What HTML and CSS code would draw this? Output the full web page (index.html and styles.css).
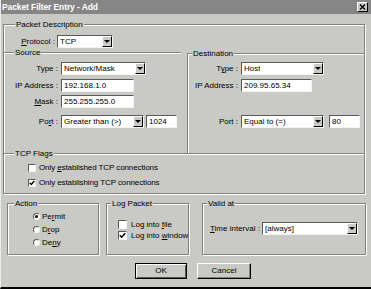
FILE: index.html
```html
<!DOCTYPE html>
<html lang="en">
<head>
    <meta charset="UTF-8">
    <title>Packet Filter Entry - Add</title>
    <link rel="stylesheet" href="styles.css">
</head>
<body>
    <div class="window">
        <div class="titlebar">
            <span class="title">Packet Filter Entry - Add</span>
            <span class="close">
                <svg width="7" height="6" viewBox="0 0 7 6"><path d="M1 0.5 L6 5.5 M6 0.5 L1 5.5" stroke="#000" stroke-width="1.4"/></svg>
            </span>
        </div>

        <div class="group desc">
            <span class="legend lg-desc">Packet Description</span>

            <div class="row protocol-row">
                <span class="lbl lbl-proto"><u>P</u>rotocol :</span>
                <div class="combo w-proto"><span class="val">TCP</span><span class="arrow"></span></div>
            </div>

            <div class="split">
                <div class="source">
                    <span class="legend lg-src">Source</span>
                    <div class="row">
                        <span class="lbl lbl-src">Type :</span>
                        <div class="combo w85"><span class="val">Network/Mask</span><span class="arrow"></span></div>
                    </div>
                    <div class="row r-ip">
                        <span class="lbl lbl-src">IP Address :</span>
                        <div class="field w73">192.168.1.0</div>
                    </div>
                    <div class="row r-mask">
                        <span class="lbl lbl-src"><u>M</u>ask :</span>
                        <div class="field w73">255.255.255.0</div>
                    </div>
                    <div class="row r-port">
                        <span class="lbl lbl-src">Po<u>r</u>t :</span>
                        <div class="combo w83"><span class="val">Greater than (&gt;)</span><span class="arrow"></span></div>
                        <div class="field w31 gap2">1024</div>
                    </div>
                </div>

                <div class="dest">
                    <span class="legend lg-dst">Destination</span>
                    <div class="row">
                        <span class="lbl lbl-dst">T<u>y</u>pe :</span>
                        <div class="combo w83"><span class="val">Host</span><span class="arrow"></span></div>
                    </div>
                    <div class="row r-ip">
                        <span class="lbl lbl-dst">IP Address :</span>
                        <div class="field w71">209.95.65.34</div>
                    </div>
                    <div class="row r-dport">
                        <span class="lbl lbl-dst">Port :</span>
                        <div class="combo w83"><span class="val">Equal to (=)</span><span class="arrow"></span></div>
                        <div class="field w31 gap5">80</div>
                    </div>
                </div>
            </div>

            <div class="tcp">
                <span class="legend lg-tcp">TCP Flags</span>
                <div class="check-row">
                    <span class="box small"></span>
                    <span>Only <u>e</u>stablished TCP connections</span>
                </div>
                <div class="check-row r-second">
                    <span class="box small">
                        <svg width="6" height="6" viewBox="0 0 7 7"><path d="M0.8 3.2 L2.7 5.2 L6.2 1.2" fill="none" stroke="#000" stroke-width="1.6"/></svg>
                    </span>
                    <span>Only establishing TCP connections</span>
                </div>
            </div>
        </div>

        <div class="lower">
            <div class="group action">
                <span class="legend lg-small">Action</span>
                <div class="radio-row"><span class="radio on"></span><span>Pe<u>r</u>mit</span></div>
                <div class="radio-row"><span class="radio"></span><span>D<u>r</u>op</span></div>
                <div class="radio-row"><span class="radio"></span><span>De<u>n</u>y</span></div>
            </div>

            <div class="group log">
                <span class="legend lg-small2">Log Packet</span>
                <div class="log-row"><span class="box"></span><span>Log into <u>f</u>ile</span></div>
                <div class="log-row">
                    <span class="box">
                        <svg width="7" height="7" viewBox="0 0 7 7"><path d="M0.8 3.2 L2.7 5.2 L6.2 1.2" fill="none" stroke="#000" stroke-width="1.5"/></svg>
                    </span>
                    <span>Log into <u>w</u>indow</span>
                </div>
            </div>

            <div class="group valid">
                <span class="legend lg-small2">Valid at</span>
                <div class="row">
                    <span class="lbl lbl-time"><u>T</u>ime interval :</span>
                    <div class="combo w96"><span class="val">[always]</span><span class="arrow"></span></div>
                </div>
            </div>
        </div>

        <div class="buttons">
            <div class="btn default">OK</div>
            <div class="btn cancel">Cancel</div>
        </div>
    </div>
</body>
</html>
```

FILE: styles.css
```css
* {
    box-sizing: border-box;
}

body {
    margin: 0;
    font-family: "Liberation Sans", Arial, sans-serif;
    font-size: 8px;
    color: #000;
    background-color: #c9c9c5;
}

.window {
    width: 371px;
    height: 289px;
    background: #c9c9c5;
    border-left: 1px solid #ececea;
    border-bottom: 2px solid #000;
    overflow: hidden;
}

.titlebar {
    height: 14px;
    background: #868686;
    color: white;
    display: flex;
    align-items: center;
    justify-content: space-between;
    padding: 0 3px 0 1px;
}

.title {
    font-size: 8.5px;
    font-weight: bold;
    letter-spacing: -0.1px;
}

.close {
    width: 11px;
    height: 10px;
    background: #c9c9c5;
    border: 1px solid;
    border-color: #fff #000 #000 #fff;
    display: flex;
    align-items: center;
    justify-content: center;
}

/* etched group box */
.group {
    position: relative;
    border: 1px solid #808080;
    box-shadow: inset 1px 1px #fff, 1px 1px #fff;
}

.legend {
    position: absolute;
    top: -5px;
    line-height: 9px;
    padding: 0 1px;
    background: #c9c9c5;
    white-space: nowrap;
}

.lg-desc { left: 11px; }
.lg-src { left: 10px; }
.lg-dst { left: 4px; }
.lg-tcp { left: 10px; }
.lg-small { left: 6px; }
.lg-small2 { left: 4px; }

.desc {
    margin: 10px 0 0 2px;
    width: 362px;
    height: 170px;
}

.row {
    display: flex;
    align-items: center;
    height: 13px;
}

.lbl {
    flex: none;
    text-align: right;
    padding-right: 3px;
    white-space: nowrap;
}

.protocol-row {
    margin-top: 10px;
}

.lbl-proto { width: 53px; padding-right: 2px; }
.lbl-src { width: 57px; }
.lbl-dst { width: 53px; }
.lbl-time { width: 52px; text-align: left; }

.split {
    display: flex;
    align-items: flex-start;
    margin-top: 4px;
    height: 101px;
}

.source {
    position: relative;
    width: 177px;
    border-top: 1px solid #808080;
    box-shadow: inset 0 1px #fff;
    padding-top: 9px;
}

.dest {
    position: relative;
    flex: 1;
    height: 100px;
    margin: 1px 0 0 6px;
    border-top: 1px solid #808080;
    border-left: 1px solid #808080;
    box-shadow: inset 1px 1px #fff;
    padding-top: 8px;
}

.r-ip { margin-top: 4px; }
.r-mask { margin-top: 3px; }
.r-port { margin-top: 7px; }
.r-dport { margin-top: 23px; }

/* sunken text field */
.field, .combo {
    height: 13px;
    background: white;
    border: 1px solid;
    border-color: #5a5a5a #f4f4f4 #f4f4f4 #5a5a5a;
    line-height: 11px;
    padding-left: 2px;
    white-space: nowrap;
    overflow: hidden;
}

.combo {
    display: flex;
    justify-content: space-between;
    padding-right: 0;
}

.val {
    overflow: hidden;
}

.arrow {
    flex: none;
    width: 10px;
    height: 11px;
    background: #c9c9c5;
    border: 1px solid;
    border-color: #fff #000 #000 #fff;
    display: flex;
    align-items: center;
    justify-content: center;
}

.arrow::after {
    content: "";
    border-left: 3px solid transparent;
    border-right: 3px solid transparent;
    border-top: 3px solid #000;
}

.w-proto { width: 56px; }
.w85 { width: 85px; }
.w83 { width: 83px; }
.w73 { width: 73px; }
.w71 { width: 71px; }
.w31 { width: 31px; }
.w96 { width: 96px; }
.gap2 { margin-left: 2px; }
.gap5 { margin-left: 5px; }

.tcp {
    position: relative;
    height: 40px;
    border-top: 1px solid #808080;
    box-shadow: inset 0 1px #fff;
    padding-top: 8px;
}

.check-row {
    display: flex;
    align-items: center;
    height: 11px;
    padding-left: 24px;
    white-space: nowrap;
    letter-spacing: -0.1px;
}

.r-second {
    margin-top: 4px;
}

.box {
    flex: none;
    width: 9px;
    height: 9px;
    margin-right: 4px;
    background: white;
    border: 1px solid;
    border-color: #5a5a5a #f4f4f4 #f4f4f4 #5a5a5a;
    display: flex;
    align-items: center;
    justify-content: center;
}

.box.small {
    width: 8px;
    height: 8px;
    margin-right: 3px;
}

.lower {
    display: flex;
    margin: 9px 0 0 6px;
}

.action {
    width: 92px;
    height: 52px;
    padding: 6px 0 0 25px;
}

.log {
    width: 83px;
    height: 52px;
    margin-left: 7px;
    padding: 15px 0 0 11px;
}

.valid {
    width: 164px;
    height: 52px;
    margin-left: 13px;
    padding: 18px 0 0 7px;
}

.radio-row {
    display: flex;
    align-items: center;
    height: 13px;
}

.radio {
    flex: none;
    width: 7px;
    height: 7px;
    margin-right: 2px;
    border-radius: 50%;
    background: white;
    border: 1px solid;
    border-color: #5a5a5a #f4f4f4 #f4f4f4 #5a5a5a;
    display: flex;
    align-items: center;
    justify-content: center;
}

.radio.on::after {
    content: "";
    width: 3px;
    height: 3px;
    border-radius: 50%;
    background: #000;
}

.log-row {
    display: flex;
    align-items: center;
    height: 11px;
    white-space: nowrap;
}

.buttons {
    display: flex;
    gap: 10px;
    margin: 8px 0 0 134px;
}

.btn {
    height: 16px;
    line-height: 14px;
    text-align: center;
    background: #c9c9c5;
    border: 1px solid;
    border-color: #fff #000 #000 #fff;
    box-shadow: inset -1px -1px #808080;
}

.default {
    width: 52px;
    border-color: #000;
    box-shadow: inset 1px 1px #fff, inset -1px -1px #555;
}

.cancel {
    width: 54px;
}
```
